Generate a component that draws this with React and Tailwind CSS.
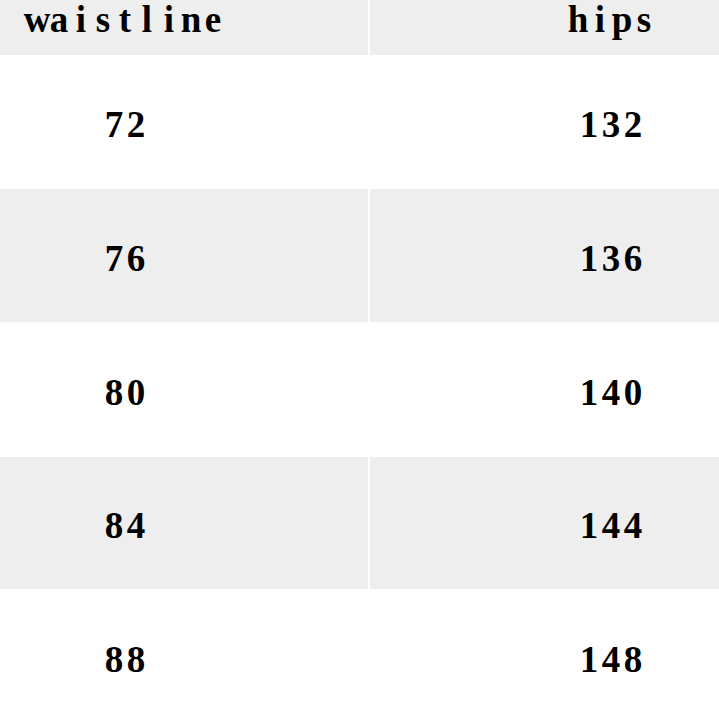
import React from "react";

function Mono({ text }) {
  return (
    <span className="flex">
      {text.split("").map((c, i) => (
        <span key={i} className="inline-flex w-[22px] justify-center">
          {c}
        </span>
      ))}
    </span>
  );
}

const rows = [
  { w: "72", h: "132", gray: false, hh: "h-[134px]" },
  { w: "76", h: "136", gray: true, hh: "h-[133px]" },
  { w: "80", h: "140", gray: false, hh: "h-[135px]" },
  { w: "84", h: "144", gray: true, hh: "h-[132px]" },
  { w: "88", h: "148", gray: false, hh: "h-[135px]" },
];

export default function App() {
  return (
    <div
      className="w-[719px] h-[719px] overflow-hidden bg-white text-black font-bold text-[37px] leading-[1.1]"
      style={{ fontFamily: '"Liberation Serif", "Noto Sans CJK SC", serif' }}
    >
      <div className="flex h-[55px] gap-[2px] bg-white">
        <div className="w-[368px] shrink-0 bg-[#eeeeee]">
          <div className="w-[250px] flex justify-center">
            <Mono text="waistline" />
          </div>
        </div>
        <div className="flex-1 bg-[#eeeeee] overflow-hidden">
          <div className="w-[482px] flex justify-center">
            <Mono text="hips" />
          </div>
        </div>
      </div>
      {rows.map((r, i) => (
        <div key={i} className={`flex ${r.hh} gap-[2px] bg-white`}>
          <div
            className={`w-[368px] shrink-0 flex items-center pt-[7px] ${
              r.gray ? "bg-[#eeeeee]" : "bg-white"
            }`}
          >
            <div className="w-[250px] flex justify-center">
              <Mono text={r.w} />
            </div>
          </div>
          <div
            className={`flex-1 overflow-hidden flex items-center pt-[7px] ${
              r.gray ? "bg-[#eeeeee]" : "bg-white"
            }`}
          >
            <div className="w-[482px] shrink-0 flex justify-center">
              <Mono text={r.h} />
            </div>
          </div>
        </div>
      ))}
    </div>
  );
}
